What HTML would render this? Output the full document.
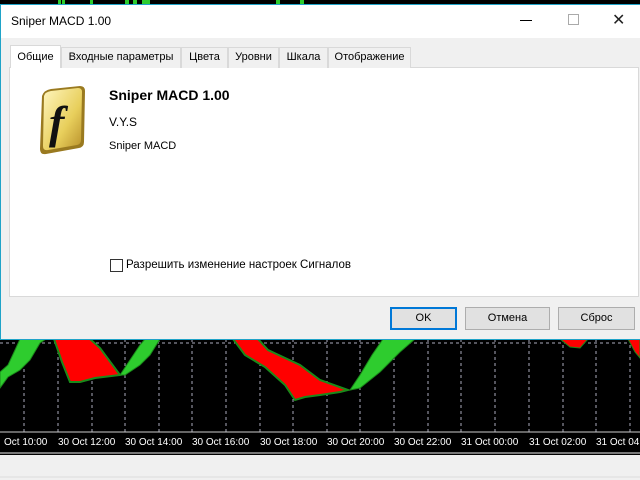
<!DOCTYPE html>
<html><head><meta charset="utf-8"><style>
*{margin:0;padding:0;box-sizing:border-box}
body{width:640px;height:480px;overflow:hidden;background:#f0f0f0;font-family:"Liberation Sans","DejaVu Sans",sans-serif;font-size:12px;color:#000;position:relative}
.abs{position:absolute}
.tab{position:absolute;top:47px;height:21px;border:1px solid #d9d9d9;border-bottom:none;background:#f0f0f0;font-size:11px;line-height:19px;text-align:center;color:#000}
.btn{position:absolute;top:307px;height:23px;background:#e1e1e1;border:1px solid #adadad;text-align:center;line-height:21px;font-size:11px}
</style></head><body>
<svg class="abs" style="left:0;top:0" width="640" height="480">
<rect x="0" y="0" width="640" height="455" fill="#000"/>
<g fill="#2ecc2e"><rect x="58" y="0" width="3" height="4"/><rect x="62" y="0" width="3" height="4"/><rect x="90" y="0" width="3" height="4"/><rect x="125" y="0" width="4" height="4"/><rect x="133" y="0" width="4" height="4"/><rect x="142" y="0" width="8" height="4"/><rect x="276" y="0" width="4" height="4"/><rect x="300" y="0" width="4" height="4"/></g>
<line x1="0" y1="343" x2="640" y2="343" stroke="#aab" stroke-dasharray="3,3"/>
<g stroke="#aab" stroke-dasharray="3,3">
<line x1="24" y1="339" x2="24" y2="432"/><line x1="58" y1="339" x2="58" y2="432"/><line x1="92" y1="339" x2="92" y2="432"/><line x1="125" y1="339" x2="125" y2="432"/><line x1="159" y1="339" x2="159" y2="432"/><line x1="192" y1="339" x2="192" y2="432"/><line x1="226" y1="339" x2="226" y2="432"/><line x1="260" y1="339" x2="260" y2="432"/><line x1="293" y1="339" x2="293" y2="432"/><line x1="327" y1="339" x2="327" y2="432"/><line x1="360" y1="339" x2="360" y2="432"/><line x1="394" y1="339" x2="394" y2="432"/><line x1="428" y1="339" x2="428" y2="432"/><line x1="461" y1="339" x2="461" y2="432"/><line x1="495" y1="339" x2="495" y2="432"/><line x1="529" y1="339" x2="529" y2="432"/><line x1="563" y1="339" x2="563" y2="432"/><line x1="596" y1="339" x2="596" y2="432"/><line x1="630" y1="339" x2="630" y2="432"/>
</g>
<polygon points="0,388 0,372 8,365 15,350 20,339 46,339 40,343 30,360 20,370 8,377" fill="#2ecc2e" stroke="#1a8a1a"/>
<polygon points="54,339 90,339 100,348 120,375 95,378 80,382 70,382 62,362" fill="#ff0000" stroke="#1a8a1a" stroke-width="2"/>
<polygon points="120,375 130,360 140,345 145,339 160,339 150,355 140,365 125,375" fill="#2ecc2e" stroke="#1a8a1a"/>
<polygon points="233,339 258,339 268,350 300,365 320,380 348,390 340,392 320,395 305,397 295,400 285,385 265,367 245,355" fill="#ff0000" stroke="#1a8a1a" stroke-width="2"/>
<polygon points="350,390 360,375 372,355 383,339 415,339 400,352 380,372 360,388" fill="#2ecc2e" stroke="#1a8a1a"/>
<polygon points="560,339 588,339 580,348 570,347" fill="#ff0000" stroke="#1a8a1a"/>
<polygon points="628,339 640,339 640,358 635,352" fill="#ff0000" stroke="#1a8a1a"/>
<line x1="0" y1="432" x2="640" y2="432" stroke="#ccc"/>
<rect x="0" y="452" width="640" height="2" fill="#777"/>
<rect x="0" y="455" width="640" height="25" fill="#f0f0f0"/>
<line x1="0" y1="477" x2="640" y2="477" stroke="#ddd"/>
<g fill="#fff" font-family="Liberation Sans,sans-serif" font-size="10">
<text x="4" y="445">Oct 10:00</text><text x="58" y="445">30 Oct 12:00</text><text x="125" y="445">30 Oct 14:00</text><text x="192" y="445">30 Oct 16:00</text><text x="260" y="445">30 Oct 18:00</text><text x="327" y="445">30 Oct 20:00</text><text x="394" y="445">30 Oct 22:00</text><text x="461" y="445">31 Oct 00:00</text><text x="529" y="445">31 Oct 02:00</text><text x="596" y="445">31 Oct 04</text>
</g>
</svg>
<div class="abs" style="left:0;top:4px;width:641px;height:336px;background:#f0f0f0;border:1px solid #1fa3c8"></div>
<div class="abs" style="left:1px;top:5px;width:639px;height:33px;background:#fff"></div>
<div class="abs" style="left:11px;top:14px;font-size:12px">Sniper MACD 1.00</div>
<div class="abs" style="left:520px;top:20px;width:12px;height:1px;background:#000"></div>
<div class="abs" style="left:568px;top:14px;width:11px;height:11px;border:1px solid #aaa"></div>
<div class="abs" style="left:612px;top:10px;font-size:16px;color:#222">✕</div>
<div class="abs" style="left:9px;top:67px;width:630px;height:230px;background:#fff;border:1px solid #d9d9d9"></div>
<div class="tab" style="left:10px;top:45px;height:23px;width:51px;background:#fff;line-height:23px">Общие</div>
<div class="tab" style="left:61px;width:120px">Входные параметры</div>
<div class="tab" style="left:181px;width:47px">Цвета</div>
<div class="tab" style="left:228px;width:51px">Уровни</div>
<div class="tab" style="left:279px;width:49px">Шкала</div>
<div class="tab" style="left:328px;width:83px">Отображение</div>
<svg class="abs" style="left:36px;top:84px" width="52" height="72">
<defs><linearGradient id="g" x1="0" y1="0" x2="1" y2="1"><stop offset="0" stop-color="#fff6c0"/><stop offset="0.6" stop-color="#e8cf5c"/><stop offset="1" stop-color="#b8902a"/></linearGradient></defs>
<path d="M6,12 Q8,6 15,5 L44,2 Q49,2 49,7 L48,58 Q48,63 43,64 L10,70 Q4,71 4,65 Z" fill="#9a7a20"/>
<path d="M8,12 Q9,8 15,7 L42,4 Q46,4 46,8 L45,56 Q45,60 41,61 L12,66 Q7,67 7,62 Z" fill="url(#g)"/>
<text x="13" y="54" font-family="Liberation Serif,serif" font-style="italic" font-weight="bold" font-size="46" fill="#111">f</text>
</svg>
<div class="abs" style="left:109px;top:87px;font-size:14px;font-weight:bold">Sniper MACD 1.00</div>
<div class="abs" style="left:109px;top:115px;font-size:12px">V.Y.S</div>
<div class="abs" style="left:109px;top:140px;font-size:11px">Sniper MACD</div>
<div class="abs" style="left:110px;top:259px;width:13px;height:13px;border:1px solid #333;background:#fff"></div>
<div class="abs" style="left:126px;top:259px;font-size:11.5px">Разрешить изменение настроек Сигналов</div>
<div class="btn" style="left:390px;width:67px;border:2px solid #0078d7;line-height:19px">OK</div>
<div class="btn" style="left:465px;width:85px">Отмена</div>
<div class="btn" style="left:558px;width:77px">Сброс</div>
</body></html>
